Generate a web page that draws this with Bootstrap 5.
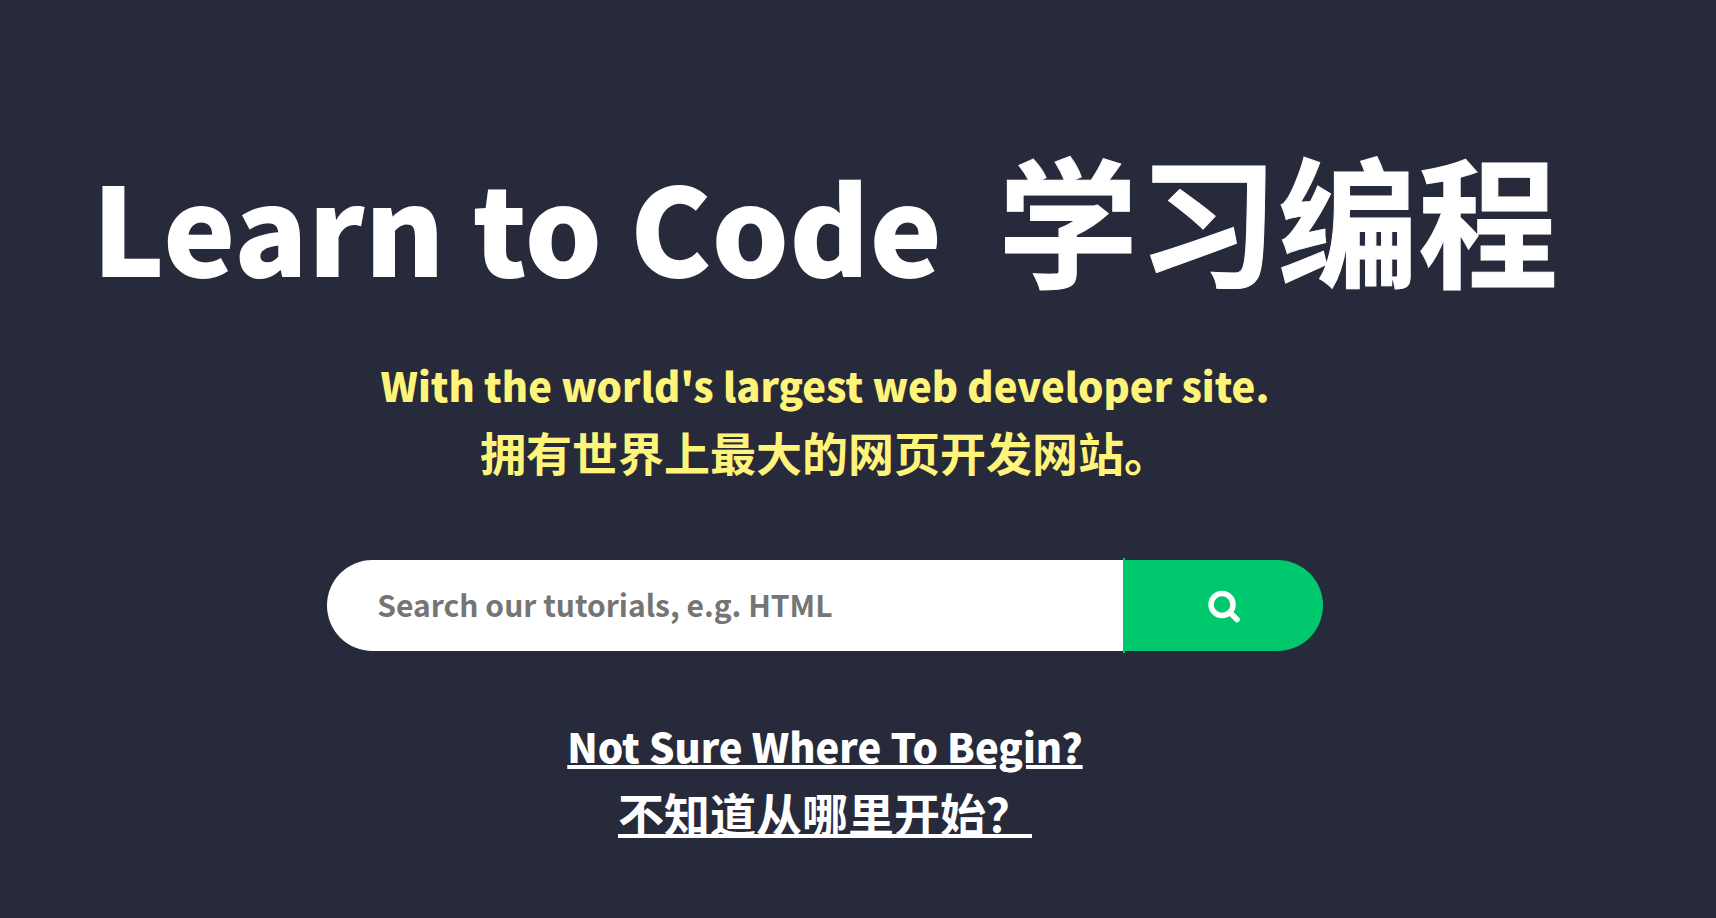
<!DOCTYPE html>
<html lang="en">
<head>
<meta charset="utf-8">
<meta name="viewport" content="width=device-width, initial-scale=1">
<title>Learn to Code</title>
<link href="https://cdn.jsdelivr.net/npm/bootstrap@5.3.0/dist/css/bootstrap.min.css" rel="stylesheet">
<style>
  body { background: #272a3b; color: #fff; font-family: "Noto Sans CJK SC", sans-serif; font-weight: 700; }
  .hero { padding: 124px 66px 48px 0; }
  .hero-title { font-size: 122px; line-height: 184px; font-weight: 900; }
  .hero-title [lang] { font-size: 140px; font-weight: 700; -webkit-text-stroke: 1px #fff; }
  .bilingual { font-size: 40px; line-height: 68px; font-weight: 900; }
  .bilingual [lang] { font-size: 46px; line-height: 64px; font-weight: 700; }
  .tagline { color: #fff47a; margin-top: 35px; }
  .search-bar { width: 58vw; max-width: 996px; height: 91px; margin-top: 77px; }
  .search-bar .form-control { border: 0; border-radius: 46px 0 0 46px; padding: 0 50px 2px; font-size: 30px; font-weight: 700; color: #000; }
  .search-bar .form-control::placeholder { color: #757575; opacity: 1; }
  .search-bar .btn { width: 200px; background: #00c86c; border: 0; border-radius: 0 46px 46px 0; }
  .search-bar .btn::before { content: ""; position: absolute; left: 0; top: -2px; bottom: -2px; width: 2px; background: #00c86c; }
  .begin { margin-top: 61px; }
  .begin a { color: #fff; text-decoration-thickness: 4px; }
</style>
</head>
<body>
<main class="hero text-center d-flex flex-column align-items-center">
  <h1 class="hero-title mb-0">Learn to Code&nbsp; <span lang="zh-CN">学习编程</span></h1>
  <p class="bilingual tagline mb-0"><span class="d-block">With the world's largest web developer site.</span><span class="d-block" lang="zh-CN">拥有世界上最大的网页开发网站。</span></p>
  <form class="search-bar d-flex" role="search">
    <input class="form-control flex-grow-1" id="tutorial-search" type="text" placeholder="Search our tutorials, e.g. HTML" aria-label="Search our tutorials">
    <button class="btn position-relative flex-shrink-0 d-flex align-items-center justify-content-center" type="submit" aria-label="Search">
      <svg width="34" height="34" viewBox="0 0 34 34" fill="none" stroke="#fff" stroke-linecap="round" aria-hidden="true"><circle cx="16" cy="15.500" r="11" stroke-width="5.500"/><path d="M24 23.500L31 30.500" stroke-width="5.500"/></svg>
    </button>
  </form>
  <p class="bilingual begin mb-0"><a href="#"><span class="d-block">Not Sure Where To Begin?</span><span class="d-block" lang="zh-CN">不知道从哪里开始？</span></a></p>
</main>
<script src="https://cdn.jsdelivr.net/npm/bootstrap@5.3.0/dist/js/bootstrap.bundle.min.js"></script>
</body>
</html>
